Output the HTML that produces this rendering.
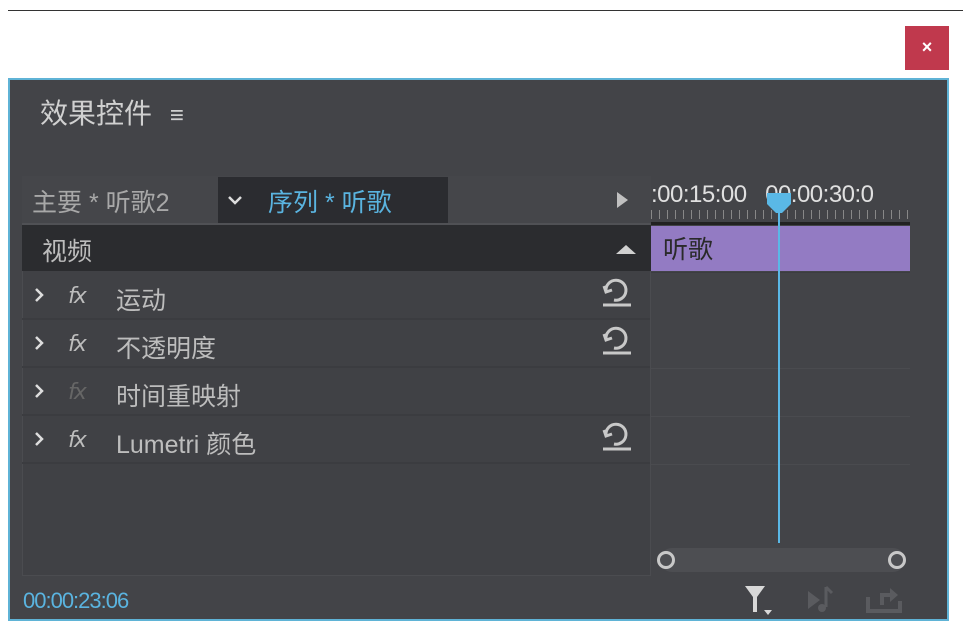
<!DOCTYPE html>
<html><head><meta charset="utf-8"><style>
*{margin:0;padding:0;box-sizing:border-box}
body{width:963px;height:636px;background:#fff;position:relative;overflow:hidden;font-family:"Liberation Sans","Noto Sans CJK SC",sans-serif}
.a{position:absolute}
.t{color:#bdbdbd;font-size:25px;white-space:nowrap}
.fx{font-style:italic;font-family:"DejaVu Sans",sans-serif;font-size:22px;letter-spacing:-2px}
.row{position:absolute;left:22px;width:628px;height:48px;border-bottom:2px solid #3b3c40}
</style></head><body>
<div class="a" style="left:8px;top:10px;width:955px;height:1px;background:#333"></div>
<div class="a" style="left:905px;top:26px;width:44px;height:44px;background:#c0394d;color:#fff;font-size:18px;font-weight:bold;text-align:center;line-height:42px">×</div>
<div class="a" style="left:8px;top:78px;width:941px;height:543px;background:#434448;border:2px solid #5fb3d6"></div>
<div class="a t" style="left:40px;top:92px;font-size:28px;color:#d0d0d0">效果控件 <span style="font-size:24px;margin-left:10px">≡</span></div>
<div class="a" style="left:22px;top:176px;width:629px;height:400px;background:#404145;border:1px solid #4b4c50"></div>
<div class="a" style="left:22px;top:176px;width:629px;height:49px;background:#45464a;border-bottom:2px solid #505155"></div>
<div class="a t" style="left:32px;top:183px;color:#a8a8a8">主要 * 听歌2</div>
<div class="a" style="left:218px;top:177px;width:230px;height:46px;background:#2b2c30"></div>
<svg class="a" style="left:226px;top:194px" width="18" height="12"><path d="M3 3 L9 9 L15 3" stroke="#ddd" stroke-width="2.5" fill="none"/></svg>
<div class="a t" style="left:268px;top:183px;color:#5ab4e0">序列 * 听歌</div>
<div class="a" style="left:617px;top:192px;width:0;height:0;border-left:11px solid #c0c0c0;border-top:8px solid transparent;border-bottom:8px solid transparent"></div>
<div class="a" style="left:22px;top:225px;width:629px;height:46px;background:#2b2c2f"></div>
<div class="a t" style="left:42px;top:232px">视频</div>
<div class="a" style="left:616px;top:245px;width:0;height:0;border-bottom:9px solid #d0d0d0;border-left:10px solid transparent;border-right:10px solid transparent"></div>
<div class="row" style="top:272px"></div><div class="row" style="top:320px"></div><div class="row" style="top:368px"></div><div class="row" style="top:416px"></div>
<svg class="a" style="left:32px;top:286px" width="14" height="170"><g stroke="#ddd" stroke-width="2.5" fill="none"><path d="M4 3 L10 9 L4 15"/><path transform="translate(0,48)" d="M4 3 L10 9 L4 15"/><path transform="translate(0,96)" d="M4 3 L10 9 L4 15"/><path transform="translate(0,144)" d="M4 3 L10 9 L4 15"/></g></svg>
<div class="a t fx" style="left:68px;top:284px">fx</div><div class="a t" style="left:116px;top:281px">运动</div>
<div class="a t fx" style="left:68px;top:332px">fx</div><div class="a t" style="left:116px;top:329px">不透明度</div>
<div class="a t fx" style="left:68px;top:380px;color:#666">fx</div><div class="a t" style="left:116px;top:377px">时间重映射</div>
<div class="a t fx" style="left:68px;top:428px">fx</div><div class="a t" style="left:116px;top:425px">Lumetri 颜色</div>
<svg class="a" style="left:600px;top:278px" width="34" height="180" viewBox="0 0 34 180">
<g fill="none" stroke="#c8c8c8" stroke-width="3">
<path d="M6 13 A10 10 0 1 1 14 22"/><path d="M4 8 L6 14 L12 12"/><path d="M3 27 H31"/>
<path transform="translate(0,48)" d="M6 13 A10 10 0 1 1 14 22 M4 8 L6 14 L12 12 M3 27 H31"/>
<path transform="translate(0,144)" d="M6 13 A10 10 0 1 1 14 22 M4 8 L6 14 L12 12 M3 27 H31"/>
</g></svg>
<!-- timeline -->
<div class="a" style="left:651px;top:176px;width:259px;height:49px;overflow:hidden">
<div class="a" style="left:0px;top:5px;color:#e0e0e0;font-size:24px;white-space:nowrap;letter-spacing:-0.5px">:00:15:00 &nbsp;&nbsp;00:00:30:0</div>
<div class="a" style="left:0;top:34px;width:259px;height:9px;background:repeating-linear-gradient(90deg,#888 0 1px,transparent 1px 8px)"></div>
<div class="a" style="left:0;top:46px;width:259px;height:3px;background:#222"></div>
</div>
<div class="a" style="left:651px;top:226px;width:259px;height:45px;background:#937bc3"></div>
<div class="a t" style="left:663px;top:230px;color:#2a2a2a">听歌</div>
<div class="a" style="left:651px;top:272px;width:259px;height:1px;background:#3c3d41"></div>
<div class="a" style="left:651px;top:368px;width:259px;height:1px;background:#4a4b4f"></div>
<div class="a" style="left:651px;top:416px;width:259px;height:1px;background:#4a4b4f"></div>
<div class="a" style="left:651px;top:464px;width:259px;height:1px;background:#4a4b4f"></div>
<div class="a" style="left:778px;top:205px;width:2px;height:338px;background:#5ab8e6"></div>
<svg class="a" style="left:766px;top:192px" width="26" height="22"><path d="M1 1 H25 V12 L16 21 H10 L1 12Z" fill="#5ab8e6"/></svg>
<div class="a" style="left:660px;top:548px;width:245px;height:24px;background:#4d4e52;border-radius:12px"></div>
<div class="a" style="left:657px;top:551px;width:18px;height:18px;border:3px solid #c8c8c8;border-radius:50%;background:#4d4e52"></div>
<div class="a" style="left:888px;top:551px;width:18px;height:18px;border:3px solid #c8c8c8;border-radius:50%;background:#4d4e52"></div>
<div class="a" style="left:23px;top:588px;color:#5ab4e0;font-size:22px;letter-spacing:-1px">00:00:23:06</div>
<svg class="a" style="left:740px;top:583px" width="170" height="34" viewBox="0 0 170 34">
<path d="M5 3 H25 L17 14 V29 H13 V14 Z" fill="#d8d8d8"/><path d="M24 27 H32 L28 32Z" fill="#d8d8d8"/>
<path d="M68 8 L80 17 L68 26Z" fill="#5a5b5f"/><path d="M86 4 V24 M86 4 L92 10" stroke="#5a5b5f" stroke-width="3" fill="none"/><circle cx="82" cy="25" r="4" fill="#5a5b5f"/>
<path d="M128 14 V28 H160 V18" stroke="#5a5b5f" stroke-width="4" fill="none"/><path d="M140 22 V10 H150 V5 L158 12 L150 19 V14 H144 V22Z" fill="#5a5b5f"/>
</svg>
</body></html>
